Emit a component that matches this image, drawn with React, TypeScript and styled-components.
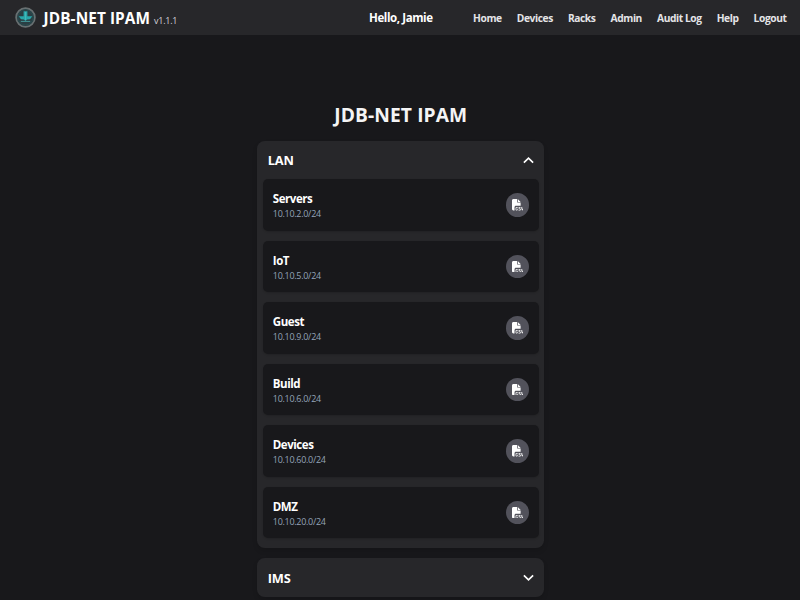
import React, { useState } from "react";
import styled, { createGlobalStyle } from "styled-components";
import { FaFileCsv } from "react-icons/fa6";

const GlobalStyle = createGlobalStyle`
  *, *::before, *::after { box-sizing: border-box; }
  body {
    margin: 0;
    height: 600px;
    overflow: hidden;
    background: #18181b;
    color: #fff;
    font-family: "Segoe UI", "Open Sans", "Noto Sans", sans-serif;
  }
  h1, h2, h3, p { margin: 0; }
`;

const Header = styled.header`
  display: flex;
  align-items: center;
  height: 35px;
  padding: 0 13.5px 0 15px;
  background: #27272a;
`;

const Logo = styled.svg`
  width: 21px;
  height: 21px;
  margin-right: 7.6px;
  flex: none;
`;

const Brand = styled.span`
  margin-top: 2px;
  font-size: 15.36px;
  line-height: 20px;
  font-weight: 700;
  letter-spacing: 0.08px;
  white-space: nowrap;
`;

const Version = styled.span`
  margin: 6px 0 0 4px;
  color: #d4d4d8;
  font-size: 8.96px;
  line-height: 12px;
  letter-spacing: -0.25px;
`;

const Greeting = styled.span`
  margin-left: auto;
  margin-right: 40.5px;
  font-size: 11.5px;
  font-weight: 700;
  letter-spacing: -0.4px;
  white-space: nowrap;
`;

const Nav = styled.nav`
  display: flex;
  gap: 15.1px;
`;

const NavLink = styled.a`
  color: #e4e4e7;
  font-size: 10.24px;
  line-height: 16px;
  font-weight: 700;
  letter-spacing: -0.42px;
  white-space: nowrap;
`;

const Main = styled.main`
  display: flex;
  flex-direction: column;
  align-items: center;
  padding: 67px 0 0 1.6px;
`;

const Title = styled.h1`
  color: #f4f4f5;
  font-size: 19.2px;
  line-height: 26px;
  font-weight: 700;
  letter-spacing: 0.1px;
`;

const Groups = styled.div`
  display: grid;
  gap: 10.6px;
  width: 286.7px;
  margin-top: 13px;
`;

const Group = styled.section`
  overflow: hidden;
  border-radius: 7.7px;
  background: #27272a;
  box-shadow: 0 3px 5px rgba(0, 0, 0, 0.12);
`;

const GroupHeader = styled.div`
  display: flex;
  align-items: center;
  justify-content: space-between;
  height: 38.4px;
  padding: 0 10.2px;
`;

const GroupName = styled.h2`
  margin-top: 0.6px;
  font-size: 12.8px;
  line-height: 18px;
  font-weight: 700;
  letter-spacing: -0.05px;
`;

const Chevron = styled.svg<{ $open: boolean }>`
  width: 11px;
  height: 11px;
  transform: ${(p) => (p.$open ? "rotate(180deg)" : "none")};
`;

const SubnetList = styled.div`
  display: grid;
  gap: 10.3px;
  padding: 0 5.1px 9.7px;
`;

const SubnetRow = styled.div`
  display: flex;
  align-items: center;
  justify-content: space-between;
  height: 51.2px;
  padding: 0 9.9px 0 10.24px;
  border-radius: 5.1px;
  background: #18181b;
  box-shadow: 0 1px 2px rgba(0, 0, 0, 0.15);
`;

const SubnetText = styled.div`
  padding-top: 1.2px;
`;

const SubnetName = styled.h3`
  font-size: 11.52px;
  line-height: 17px;
  font-weight: 700;
  letter-spacing: -0.45px;
`;

const SubnetAddress = styled.p`
  color: #94a3b8;
  font-size: 8.96px;
  line-height: 13.2px;
  letter-spacing: -0.27px;
`;

const ExportButton = styled.button`
  display: grid;
  place-items: center;
  width: 23.5px;
  height: 23.5px;
  padding: 0;
  border: 0;
  border-radius: 50%;
  background: #52525b;
  color: #fff;
  font-size: 11.5px;
`;

const links = ["Home", "Devices", "Racks", "Admin", "Audit Log", "Help", "Logout"];

const groups = [
  {
    name: "LAN",
    subnets: [
      ["Servers", "10.10.2.0/24"],
      ["IoT", "10.10.5.0/24"],
      ["Guest", "10.10.9.0/24"],
      ["Build", "10.10.6.0/24"],
      ["Devices", "10.10.60.0/24"],
      ["DMZ", "10.10.20.0/24"],
    ],
  },
  { name: "IMS", subnets: [] },
];

function BrandLogo() {
  return (
    <Logo viewBox="0 0 21 21">
      <circle cx="10.5" cy="10.5" r="9.4" fill="#2b3e43" stroke="#687072" strokeWidth="1.7" />
      <circle cx="10.5" cy="10.5" r="7.6" fill="none" stroke="#284c50" strokeWidth="1" />
      <path d="M8.6 4.3h3.8v4.9l4.9.1-2.3 3-2.9.2-1.6 1.6-1.6-1.6-2.9-.2-2.3-3 4.9-.1z" fill="#28a7aa" />
      <path d="M5.8 14.4h9.4M10.5 5v8" stroke="#4fc0c0" strokeWidth=".7" />
    </Logo>
  );
}

export default function App() {
  const [open, setOpen] = useState("LAN");
  return (
    <>
      <GlobalStyle />
      <Header>
        <BrandLogo />
        <Brand>JDB-NET IPAM</Brand>
        <Version>v1.1.1</Version>
        <Greeting>Hello, Jamie</Greeting>
        <Nav>
          {links.map((label) => (
            <NavLink key={label}>{label}</NavLink>
          ))}
        </Nav>
      </Header>
      <Main>
        <Title>JDB-NET IPAM</Title>
        <Groups>
          {groups.map(({ name, subnets }) => (
            <Group key={name}>
              <GroupHeader onClick={() => setOpen(open === name ? "" : name)}>
                <GroupName>{name}</GroupName>
                <Chevron $open={open === name} viewBox="0 0 10 10">
                  <path d="M.8 3.1 5 7.2l4.2-4.1" fill="none" stroke="#fff" strokeWidth="1.5" />
                </Chevron>
              </GroupHeader>
              {open === name && (
                <SubnetList>
                  {subnets.map(([label, address]) => (
                    <SubnetRow key={label}>
                      <SubnetText>
                        <SubnetName>{label}</SubnetName>
                        <SubnetAddress>{address}</SubnetAddress>
                      </SubnetText>
                      <ExportButton aria-label="Export CSV">
                        <FaFileCsv />
                      </ExportButton>
                    </SubnetRow>
                  ))}
                </SubnetList>
              )}
            </Group>
          ))}
        </Groups>
      </Main>
    </>
  );
}
